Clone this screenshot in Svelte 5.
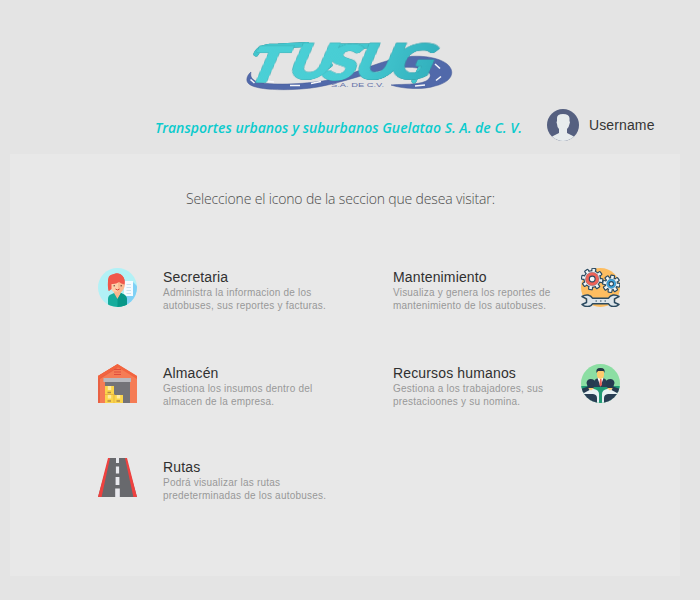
<script>
  const left = [
    { id: 'secretaria', title: 'Secretaria', lines: ['Administra la informacion de los', 'autobuses, sus reportes y facturas.'] },
    { id: 'almacen', title: 'Almacén', lines: ['Gestiona los insumos dentro del', 'almacen de la empresa.'] },
    { id: 'rutas', title: 'Rutas', lines: ['Podrá visualizar las rutas', 'predeterminadas de los autobuses.'] }
  ];
  const right = [
    { id: 'mantenimiento', title: 'Mantenimiento', lines: ['Visualiza y genera los reportes de', 'mantenimiento de los autobuses.'] },
    { id: 'recursos', title: 'Recursos humanos', lines: ['Gestiona a los trabajadores, sus', 'prestacioones y su nomina.'] }
  ];
  const teeth = [0, 45, 90, 135, 180, 225, 270, 315];
</script>

{#snippet gear(x, y, r, color)}
  <g transform="translate({x} {y})">
    {#each teeth as a}
      <rect x="-1.9" y={-r - 2.4} width="3.8" height="4" rx=".6" fill="#eef4f6" stroke="#2b4a60" stroke-width="1.2" transform="rotate({a + 10})" />
    {/each}
    <circle r={r} fill="#eef4f6" stroke="#2b4a60" stroke-width="1.2" />
    {#each teeth as a}
      <rect x="-1.2" y={-r - 1.2} width="2.4" height="3" fill="#eef4f6" transform="rotate({a + 10})" />
    {/each}
    <circle r={r - 1.5} fill={color} stroke="#2b4a60" stroke-width=".3" />
    <circle r={r * 0.35} fill="#f4f6f6" stroke="#2b4a60" stroke-width="1.1" />
  </g>
{/snippet}

{#snippet icon(id)}
  <svg class="icon" viewBox="0 0 39 39" width="39" height="39" aria-hidden="true">
    {#if id === 'secretaria'}
      <defs><clipPath id="disc"><circle cx="19.5" cy="19.5" r="19.5" /></clipPath></defs>
      <circle cx="19.5" cy="19.5" r="19.5" fill="#b2f1f6" />
      <g clip-path="url(#disc)">
        <path d="M35 14L39 18V32L30 38L26 27Z" fill="#7fd0f5" />
        <rect x="26" y="13" width="9" height="15" fill="#f5fbff" />
        <path d="M28.5 16.5H33M28.5 19.5H33M28.5 22.5H33M28.5 25.5H33" stroke="#c9e2ef" />
        <path d="M10.500 23C9 14 10 7 16 6C21 3.500 28 8 26.500 16L26 20H14Z" fill="#f0584b" />
        <path d="M12 15Q19 15 21 10Q23 15 26.500 16L26 20Q24 25 19.500 25Q14 25 12.500 19Z" fill="#ffcea9" />
        <path d="M20 13Q22 12 22 11Q23 15 26.500 16L26 20Q24 25 20 25Z" fill="#fbb990" />
        <path d="M11 23C9 10 10 7 15 6.500C21 3.500 28 8 26.500 16.500Q23 15.500 21 14Q18 16.500 13.500 16V21Z" fill="#f0584b" />
        <path d="M16 23.500H23V27L19.500 32L16 27Z" fill="#f8b78f" />
        <path d="M10 39V31Q10 27 14 26L16 25L19.500 31L23 25L26 26.500Q29 28 29 32V39Z" fill="#16ac9c" />
        <path d="M19.500 31L23 25L26 26.500Q29 28 29 32V39H19.500Z" fill="#079788" />
        <path d="M15.500 17.800H17M22.500 17.800H24" stroke="#593f38" />
        <path d="M17.500 21Q19.500 23 21.500 21" stroke="#d33d3a" fill="none" />
      </g>
    {:else if id === 'almacen'}
      <path d="M0 39V12L19.500 .3L39 12V39Z" fill="#f57c55" />
      <path d="M0 39V12L19.500 .3V4L2 15V39Z" fill="#e96143" />
      <path d="M19.500 0L39 12V15L19.500 3L0 15V12Z" fill="#f2643f" />
      <path d="M16 5.500H23M16 8H23M16 10.500H23" stroke="#df4d3e" />
      <rect x="7" y="17" width="25" height="22" fill="#747378" />
      <rect x="5.500" y="14" width="27.500" height="4" fill="#b9b9be" />
      <path d="M7 22H16V31H25V39H7Z" fill="#fbd44b" />
      <path d="M9.800 22H13.200V26H9.800ZM9.800 31H13.200V34.500H9.800ZM18.800 31H22.200V34.500H18.800Z" fill="#ffeaa1" />
      <path d="M7 30.500H16.500M16 31V39" stroke="#e9b741" />
      <path d="M9.500 28.500H13M9.500 37H13M18.500 37H22" stroke="#b48b46" stroke-width="1.500" />
    {:else if id === 'rutas'}
      <path d="M11 0H28L39 39H0Z" fill="#68696d" />
      <path d="M10 0H12L3.600 39H0ZM27 0H29L39 39H35.400Z" fill="#ef413f" />
      <path d="M18 0H21V5H18ZM17.900 8.500H21.100V15.500H17.900ZM17.600 19H21.400V27H17.600ZM17.200 30.500H21.800V39H17.200Z" fill="#e9e9ee" />
    {:else if id === 'mantenimiento'}
      <circle cx="19.500" cy="19.500" r="19.500" fill="#fdbd60" />
      {@render gear(11.2, 11, 8.3, '#ee6257')}
      {@render gear(30.3, 15.8, 6.2, '#3ca5df')}
      <path d="M1 28.500C5 26 9.500 26.500 11.500 30.200H27.500C29.500 26.500 34 26 38 28.500L33.500 30.800V34.500L38 36.500C34 39.800 29.500 39 27.500 35.800H11.500C9.500 39 5 39.800 1 36.500L5.500 34.500V30.800Z" fill="#dce4e9" stroke="#2b4a60" stroke-width="1.500" stroke-linejoin="round" />
      <path d="M14.500 33H16M19 33H20.500M23.500 33H25" stroke="#2b4a60" />
    {:else}
      <defs><clipPath id="round"><circle cx="19.500" cy="19.500" r="19.500" /></clipPath></defs>
      <g clip-path="url(#round)">
        <rect width="39" height="39" fill="#8cdea3" />
        <path d="M0 22H39V39H0Z" fill="#219b75" />
        <path d="M12 23Q12 15 17 14H22Q27 15 27 23Z" fill="#293e54" />
        <path d="M16.500 14H22.500L19.500 22.500Z" fill="#fff" />
        <path d="M19 15H20.500L21 21L19.500 22.500L18.300 21Z" fill="#eb6259" />
        <path d="M16 6H23V11Q23 14.500 19.500 15Q16 14.500 16 11Z" fill="#ffcb6e" />
        <path d="M15.500 9Q14.500 4 19 4Q24.500 3.500 23.500 9L22.500 7H17Z" fill="#233545" />
        {#each [0, 1] as side}
          <g transform={side ? 'translate(39 0) scale(-1 1)' : ''}>
            <path d="M0 26L7 25H13Q18 26 18 30V39H0Z" fill="#e8f1f4" />
            <path d="M0 30L12 30Q16 30.500 16 34V39H0Z" fill="#293e54" />
            <path d="M0 28V25L7 22.500L8.500 26L3 29Z" fill="#263b50" />
            <path d="M7.300 20H12.600V24.500L10 26.500L7.500 24.500Z" fill="#ffcb6e" />
            <path d="M5.500 19Q6 15 9.700 15Q14 15 14 19L12.700 24H7Z" fill="#263b50" />
          </g>
        {/each}
      </g>
    {/if}
  </svg>
{/snippet}

{#snippet card(item)}
  <div class="copy">
    <h2>{item.title}</h2>
    {#each item.lines as line}<p>{line}</p>{/each}
  </div>
{/snippet}

<main>
  <header>
    <svg class="logo" viewBox="0 0 210 54" width="210" height="54" role="img" aria-label="TUSUG S.A. de C.V.">
      <defs>
        <linearGradient id="aqua" gradientUnits="userSpaceOnUse" x1="0" y1="0" x2="150" y2="0"><stop offset="0" stop-color="#4bd0d6" /><stop offset=".55" stop-color="#48cdd4" /><stop offset="1" stop-color="#32b0bd" /></linearGradient>
      </defs>
      <path d="M7 34C3 37 1 43 5 46C13 53 50 53 74 49C92 46 112 39 128 35C148 29 168 28 178 31C190 34 188 42 178 44.500C168 47 154 46 147 47C158 51 180 52 191 48C204 45 210 38 207 31C203 21 180 15 154 20C130 25 106 38 84 42C58 47 24 47 14 44C8 42 6 39 7 34Z" fill="#5169aa" stroke="#455994" stroke-width=".5" />
      <path d="M6.500 41.500L10.500 45M21 43L30 44M46 47.500L56 47.500M67 45.500L77 43.500M191 26L196 30.500M192 42.500L197 38.500M171 48L181 47" stroke="#f5f6fa" stroke-width="1.600" />
      <g class="swash">
        <path d="M12 16C15 9 24 8 34 8L63 6.500" />
        <path d="M55 37C66 43 76 34 86 27M96 8L126 8" />
        <path d="M121 38C132 42 140 38 149 30" />
        <path d="M177 29L170 43" />
      </g>
      <text class="letters" transform="translate(0 42) skewX(-16) scale(1.250 1)" x="2 34 62.500 87 115" dy="2 -2.500 0.500 -1 0">TUSUG</text>
      <text class="legal" x="87" y="49.300" textLength="53" lengthAdjust="spacingAndGlyphs">S.A. DE C.V.</text>
    </svg>
    <div class="identity">
      <h1>Transportes urbanos y suburbanos Guelatao S. A. de C. V.</h1>
      <div class="user">
        <svg viewBox="0 0 32 32" width="32" height="32" aria-hidden="true">
          <circle cx="16" cy="16" r="16" fill="#556080" />
          <path d="M5 27.600L12 24V20Q10 18 10 15Q9 13 10 12V9Q10 5 16 5Q22 5 22.500 9V12Q23.500 13 22.500 15Q22 18 20 20V24L27 27.600Q22 32 16 32Q10 32 5 27.600Z" fill="#e7eced" />
        </svg>
        <span>Username</span>
      </div>
    </div>
  </header>
  <section class="panel">
    <p class="prompt">Seleccione el icono de la seccion que desea visitar:</p>
    <div class="columns">
      <div class="column">
        {#each left as item}
          <div class="item {item.id}">{@render icon(item.id)}{@render card(item)}</div>
        {/each}
      </div>
      <div class="column narrow">
        {#each right as item}
          <div class="item end {item.id}">{@render card(item)}{@render icon(item.id)}</div>
        {/each}
      </div>
    </div>
  </section>
</main>

<style>
  :global(body) { margin: 0; background: #e4e4e4; }
  main { width: 700px; height: 600px; background: #e4e4e4; font-family: "Liberation Sans", Arial, sans-serif; overflow: hidden; }
  h1, h2, p { margin: 0; white-space: nowrap; }
  header { height: 154px; padding: 38px 0 0; box-sizing: border-box; }
  svg { display: block; flex: none; }
  .logo { margin-left: 244px; overflow: visible; }
  .letters { font: italic 900 50px "Lato", sans-serif; fill: url(#aqua); stroke: url(#aqua); stroke-width: 1.6; stroke-linejoin: round; filter: drop-shadow(0 0 .4px #256d75); }
  .swash { fill: none; stroke: #43c6ce; stroke-width: 5; stroke-linecap: round; filter: drop-shadow(0 0 .4px #256d75); }
  .legal { font: 5.500px "Liberation Sans", sans-serif; fill: #6573a9; }
  .identity { display: flex; padding: 17px 0 0 155px; }
  h1 { width: 392px; padding-top: 9px; font: italic 600 14px/20px "Open Sans", sans-serif; letter-spacing: .02px; color: #0bcbcd; }
  .user { display: flex; align-items: center; gap: 10px; height: 32px; font-size: 14px; letter-spacing: .12px; color: #353535; }
  .panel { width: 670px; height: 422px; margin-left: 10px; box-sizing: border-box; padding-top: 35px; background: #e8e8e8; }
  .prompt { height: 20px; padding-left: 176px; font: 300 14px/20px "Open Sans", sans-serif; letter-spacing: -.16px; color: #4c4c4c; }
  .columns { display: flex; padding: 59px 0 0 88px; }
  .column { width: 295px; flex: none; }
  .column.narrow { width: 227px; }
  .item { display: flex; gap: 26px; height: 96px; }
  .item.almacen { height: 94px; }
  .item.end { gap: 0; }
  .end .copy { width: 188px; flex: none; }
  h2 { font-size: 14px; line-height: 18px; font-weight: 400; color: #303030; letter-spacing: .15px; }
  .copy p { font-size: 10px; line-height: 13px; color: #989898; letter-spacing: .21px; }
</style>
